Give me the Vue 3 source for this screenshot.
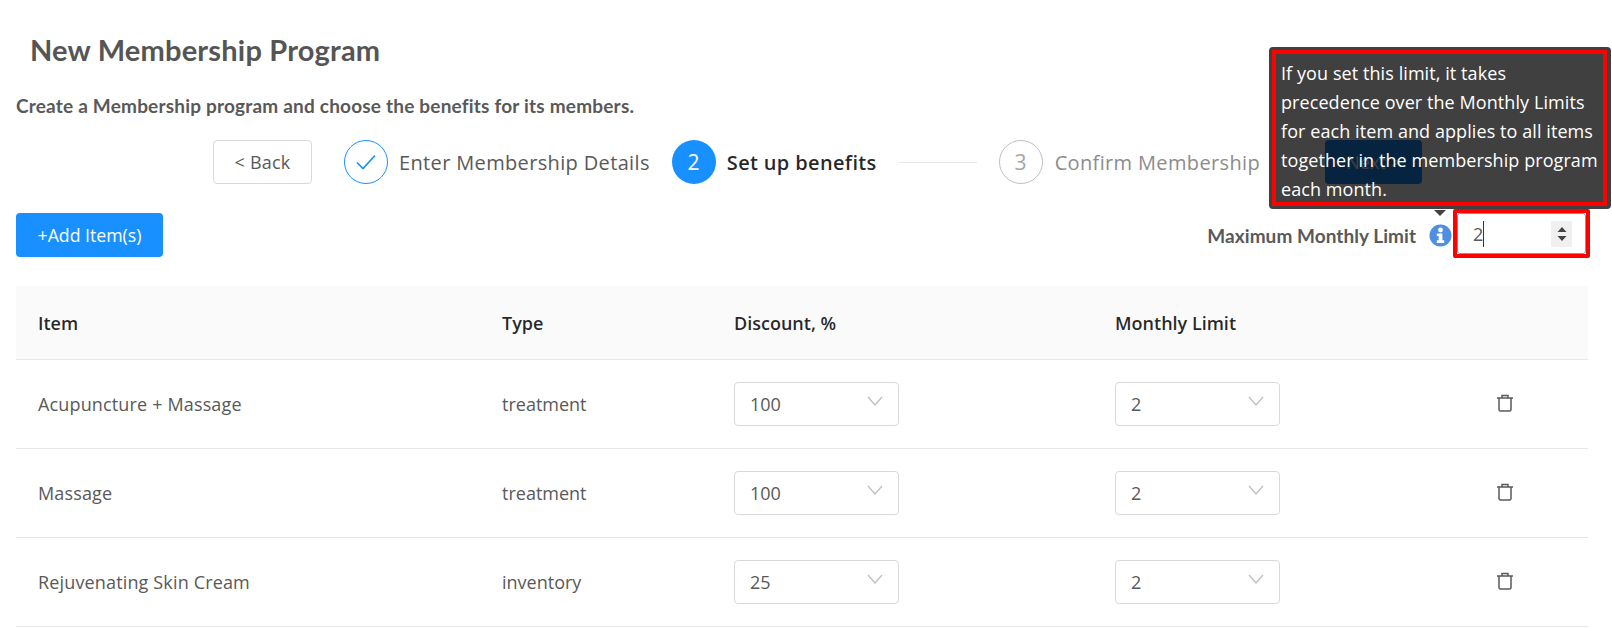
<script setup>
const rows = [
  { name: 'Acupuncture + Massage', type: 'treatment', discount: '100', limit: '2' },
  { name: 'Massage', type: 'treatment', discount: '100', limit: '2' },
  { name: 'Rejuvenating Skin Cream', type: 'inventory', discount: '25', limit: '2' }
]
</script>

<template>
  <div class="page">
    <h1 class="title">New Membership Program</h1>
    <p class="sub">Create a Membership program and choose the benefits for its members.</p>

    <div class="steps">
      <button class="back">&lt; Back</button>
      <div class="step done">
        <span class="circle">
          <svg width="20" height="16" viewBox="0 0 20 16"><path d="M1 8.5 L7 14.5 L19 1.5" fill="none" stroke="#1890ff" stroke-width="1.7" /></svg>
        </span>
        <span class="label">Enter Membership Details</span>
      </div>
      <div class="step active">
        <span class="circle">2</span>
        <span class="label">Set up benefits</span>
      </div>
      <span class="line"></span>
      <div class="step todo">
        <span class="circle">3</span>
        <span class="label">Confirm Membership</span>
      </div>
      <button class="next">Next &gt;</button>
    </div>

    <div class="toolbar">
      <button class="add">+Add Item(s)</button>
      <div class="limit">
        <span class="limit-label">Maximum Monthly Limit</span>
        <svg class="info" width="23" height="23" viewBox="0 0 23 23">
          <circle cx="11.5" cy="11.5" r="11" fill="#4f8fe0" />
          <circle cx="11.5" cy="6" r="2.4" fill="#fff" />
          <path d="M7.8 9.5h5.6v6.8h1.8v2.6H7.8v-2.6h1.8v-4.2H7.8z" fill="#fff" />
        </svg>
        <div class="red-input">
          <div class="input">
            <span class="value">2</span><span class="caret"></span>
            <span class="spin">
              <svg width="12" height="18" viewBox="0 0 12 18"><path d="M6 2 L10.5 7 H1.5Z M6 16 L1.5 11 H10.5Z" fill="#444" /></svg>
            </span>
          </div>
        </div>
        <div class="tooltip">
          <div class="tooltip-box">
            <div class="tooltip-text">If you set this limit, it takes precedence over the Monthly Limits for each item and applies to all items together in the membership program each month.</div>
          </div>
          <span class="arrow"></span>
        </div>
      </div>
    </div>

    <div class="table">
      <div class="row head">
        <span>Item</span><span>Type</span><span>Discount, %</span><span>Monthly Limit</span><span></span>
      </div>
      <div v-for="r in rows" :key="r.name" class="row">
        <span class="name">{{ r.name }}</span>
        <span>{{ r.type }}</span>
        <div class="select">
          <span>{{ r.discount }}</span>
          <svg width="16" height="10" viewBox="0 0 16 10"><path d="M1 1 L8 9 L15 1" fill="none" stroke="#bfbfbf" stroke-width="1.3" /></svg>
        </div>
        <div class="select">
          <span>{{ r.limit }}</span>
          <svg width="16" height="10" viewBox="0 0 16 10"><path d="M1 1 L8 9 L15 1" fill="none" stroke="#bfbfbf" stroke-width="1.3" /></svg>
        </div>
        <svg class="trash" width="18" height="18" viewBox="0 0 18 18">
          <path d="M1 4 H17 M6 4 V1.5 H12 V4 M3 4 V15.5 Q3 17 4.5 17 H13.5 Q15 17 15 15.5 V4" fill="none" stroke="#595959" stroke-width="1.5" />
        </svg>
      </div>
    </div>
  </div>
</template>

<style scoped>
.page {
  width: 1612px;
  height: 628px;
  overflow: hidden;
  box-sizing: border-box;
  padding: 0 24px 0 16px;
  background: #fff;
  font-family: "Open Sans", "Noto Sans", sans-serif;
  color: #595959;
  font-size: 18px;
}
.title {
  margin: 0;
  padding: 32px 0 0 14px;
  font-family: Lato, sans-serif;
  font-size: 29px;
  letter-spacing: .2px;
  line-height: 36px;
  font-weight: 700;
  color: #555;
}
.sub {
  margin: 0;
  padding-top: 26px;
  font-family: Lato, sans-serif;
  font-size: 19px;
  letter-spacing: .2px;
  line-height: 24px;
  font-weight: 700;
  color: #595959;
}
.steps {
  display: flex;
  align-items: center;
  height: 44px;
  margin-top: 22px;
  padding-left: 197px;
}
button {
  font-family: inherit;
  cursor: pointer;
  box-sizing: border-box;
}
.back {
  width: 99px;
  height: 44px;
  border: 1px solid #d9d9d9;
  border-radius: 4px;
  background: #fff;
  color: #595959;
  font-size: 18px;
  letter-spacing: .2px;
  margin-right: 32px;
}
.step {
  display: flex;
  align-items: center;
  gap: 11px;
  font-size: 20px;
  letter-spacing: .35px;
}
.circle {
  width: 44px;
  height: 44px;
  box-sizing: border-box;
  border-radius: 50%;
  display: flex;
  align-items: center;
  justify-content: center;
  font-size: 21px;
}
.done .circle { border: 1px solid #1890ff; }
.done { margin-right: 22px; }
.active .circle { background: #1890ff; color: #fff; }
.active .label { color: rgba(0, 0, 0, .85); font-weight: 600; }
.line {
  width: 78px;
  height: 1px;
  background: #e8e8e8;
  margin: 0 22px;
}
.todo .circle { border: 1px solid #bfbfbf; color: #a6a6a6; }
.todo .label { color: #8c8c8c; margin-left: 1px; }
.next {
  width: 97px;
  height: 44px;
  margin-left: 65px;
  border: 0;
  border-radius: 4px;
  background: #1890ff;
  color: #fff;
  font-size: 18px;
}
.toolbar {
  display: flex;
  justify-content: space-between;
  align-items: center;
  height: 46px;
  margin-top: 28px;
}
.add {
  width: 147px;
  height: 44px;
  border: 0;
  border-radius: 4px;
  background: #1890ff;
  color: #fff;
  font-size: 17.7px;
}
.limit {
  position: relative;
  display: flex;
  align-items: center;
}
.limit-label {
  font-family: Lato, sans-serif;
  font-weight: 700;
  font-size: 19px;
  letter-spacing: .05px;
  color: #595959;
  margin-right: 13px;
}
.info { margin-right: 1px; }
.red-input {
  width: 137px;
  height: 49px;
  box-sizing: border-box;
  border: 4px solid #f00;
  border-radius: 2px;
  margin: -3px -2px 0 0;
}
.input {
  height: 100%;
  box-sizing: border-box;
  border: 1px solid #40a9ff;
  border-radius: 3px;
  display: flex;
  align-items: center;
  padding-left: 15px;
  position: relative;
  color: #595959;
}
.caret {
  width: 1px;
  height: 26px;
  background: #333;
}
.spin {
  position: absolute;
  right: 13px;
  top: 7px;
  width: 21px;
  height: 26px;
  background: #f0f0f0;
  display: flex;
  align-items: center;
  justify-content: center;
}
.tooltip {
  position: absolute;
  top: -3px;
  right: -23px;
  transform: translateY(-100%);
  width: 342px;
}
.tooltip-box {
  box-sizing: border-box;
  background: rgba(0, 0, 0, .75);
  border-radius: 4px;
  padding: 3px 4px 3px 3px;
}
.tooltip-text {
  box-sizing: border-box;
  height: 156px;
  border: 4px solid #f00;
  padding: 5px 0 0 5px;
  color: #fff;
  font-size: 18px;
  letter-spacing: .08px;
  line-height: 29px;
}
.arrow {
  position: absolute;
  left: 165px;
  top: calc(100% + 1px);
  border-left: 6px solid transparent;
  border-right: 6px solid transparent;
  border-top: 6px solid rgba(0, 0, 0, .75);
}
.table {
  margin-top: 28px;
  width: 1572px;
}
.row {
  display: grid;
  grid-template-columns: 464px 232px 381px 381px 1fr;
  align-items: center;
  height: 89px;
  padding-left: 22px;
  box-sizing: border-box;
  border-bottom: 1px solid #e8e8e8;
  font-size: 18px;
}
.name { letter-spacing: .15px; }
.head {
  height: 74px;
  background: #fafafa;
  color: rgba(0, 0, 0, .85);
  font-weight: 600;
  font-size: 18px;
}
.select {
  width: 165px;
  height: 44px;
  box-sizing: border-box;
  border: 1px solid #d9d9d9;
  border-radius: 4px;
  display: flex;
  align-items: center;
  justify-content: space-between;
  padding: 0 15px;
}
.select svg { margin-top: -6px; }
.trash { margin-top: -3px; }
</style>
